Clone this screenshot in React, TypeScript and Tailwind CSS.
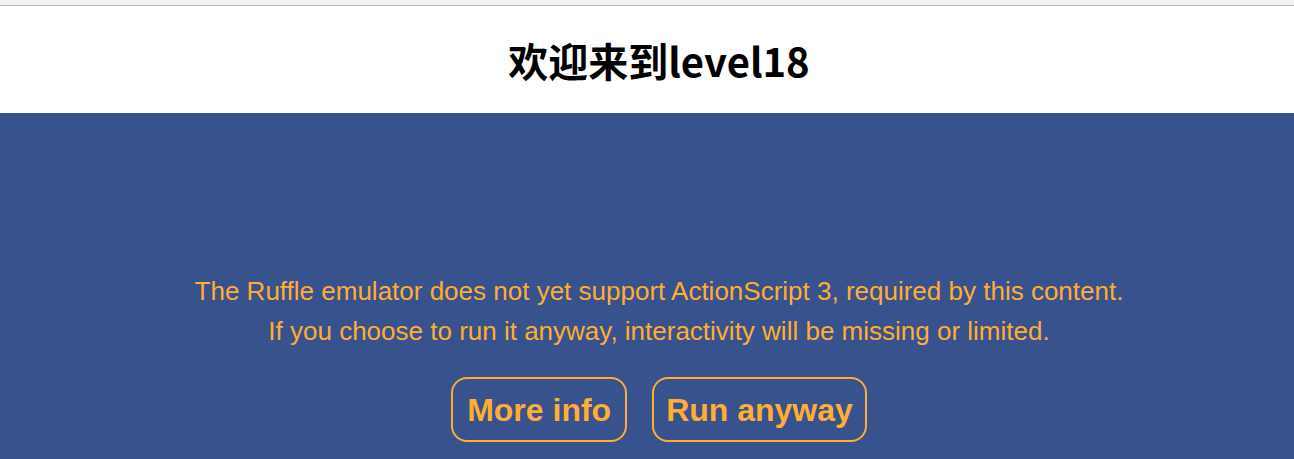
export default function App() {
  return (
    <div className="w-[1294px] h-[459px] overflow-hidden bg-white">
      <div className="h-[6px] bg-[#f1f1f1] border-b border-[#bdbdbd]" />
      <header className="h-[107px] flex items-center justify-center pl-[24px]">
        <h1 className="text-[40px] font-bold text-black font-['Microsoft_YaHei','Noto_Sans_CJK_SC',sans-serif] leading-none">
          欢迎来到level18
        </h1>
      </header>
      <main className="h-[346px] bg-[#37528c] flex flex-col items-center pl-[24px] pt-[158px] font-['Liberation_Sans',Arial,sans-serif] text-[#ffad33]">
        <p className="text-[26px] leading-[40px] text-center">
          The Ruffle emulator does not yet support ActionScript 3, required by this content.
          <br />
          If you choose to run it anyway, interactivity will be missing or limited.
        </p>
        <div className="flex gap-[25px] mt-[26px]">
          <button className="h-[65px] px-[14px] border-2 border-[#ffad33] rounded-[16px] text-[32px] font-bold">
            More info
          </button>
          <button className="h-[65px] px-[12px] border-2 border-[#ffad33] rounded-[16px] text-[32px] font-bold">
            Run anyway
          </button>
        </div>
      </main>
    </div>
  );
}
